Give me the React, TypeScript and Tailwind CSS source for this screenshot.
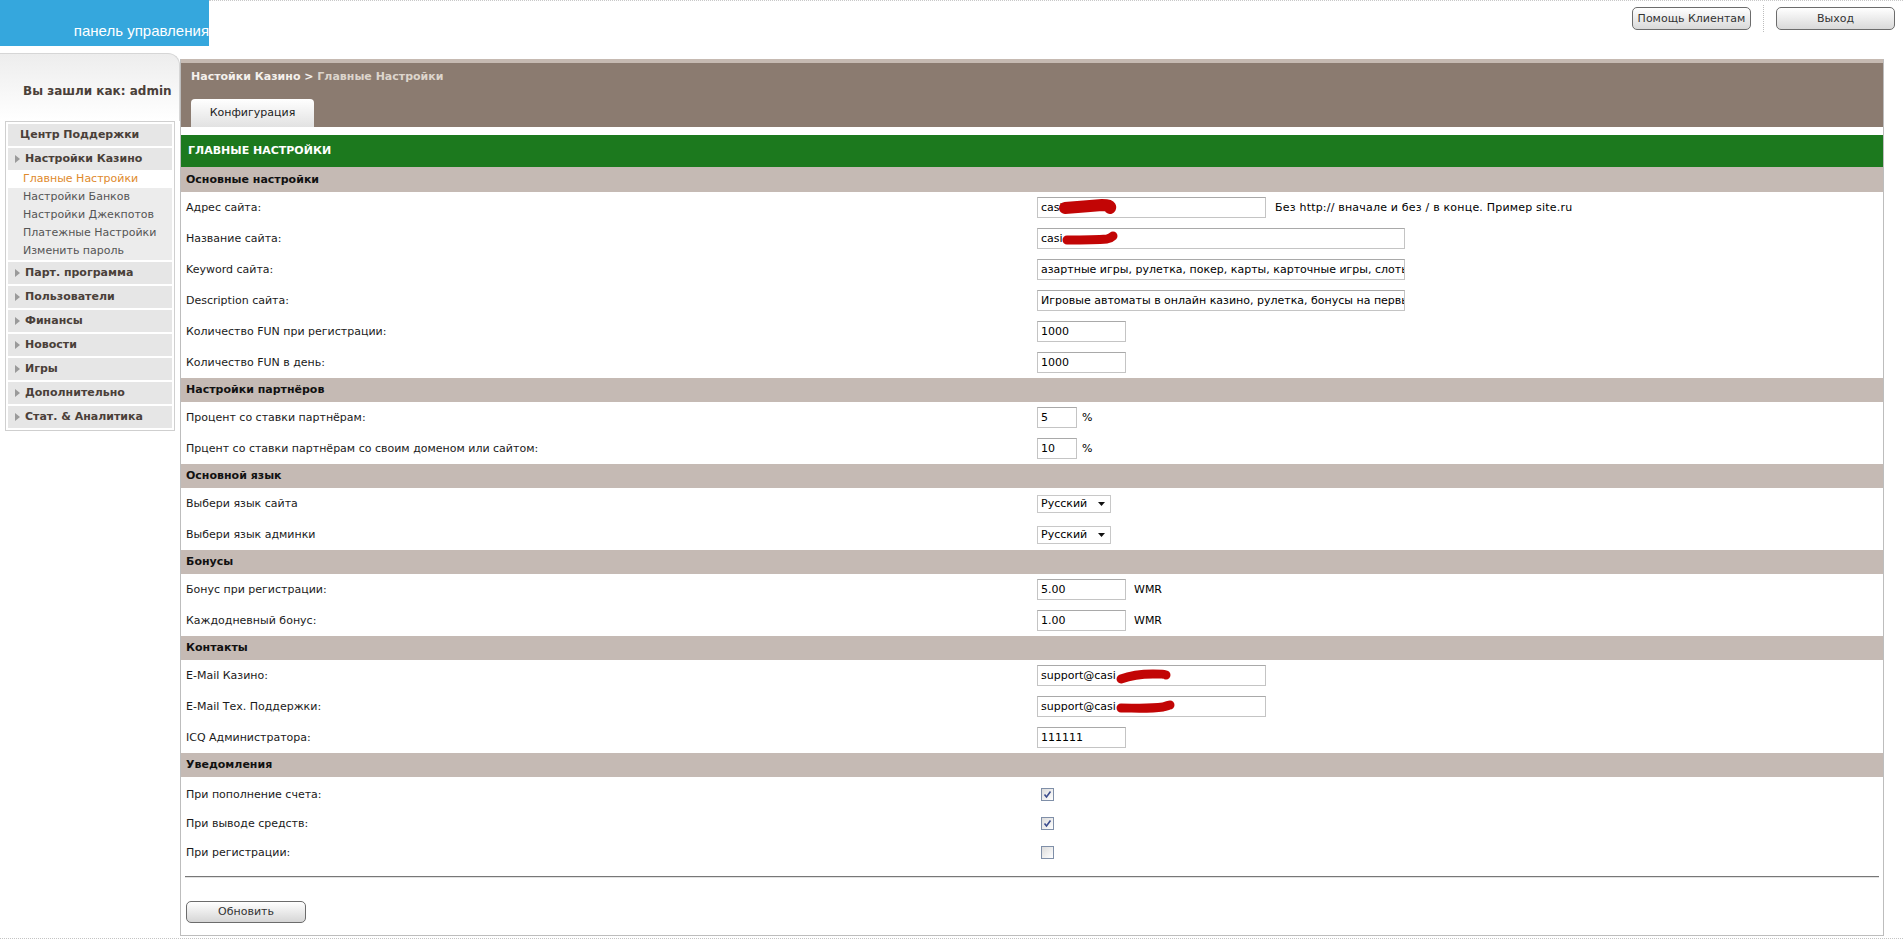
import React from "react";

type Row =
  | { kind: "text"; label: string; value: string; w: string; suffix?: string; hint?: string; scribble?: "a" | "b" | "c" | "d" }
  | { kind: "select"; label: string; value: string }
  | { kind: "check"; label: string; checked: boolean };

type Section = { title: string; rows: Row[] };

const sections: Section[] = [
  {
    title: "Основные настройки",
    rows: [
      { kind: "text", label: "Адрес сайта:", value: "casi", w: "w-[229px]", hint: "Без http:// вначале и без / в конце. Пример site.ru", scribble: "a" },
      { kind: "text", label: "Название сайта:", value: "casi", w: "w-[368px]", scribble: "b" },
      { kind: "text", label: "Keyword сайта:", value: "азартные игры, рулетка, покер, карты, карточные игры, слоты", w: "w-[368px]" },
      { kind: "text", label: "Description сайта:", value: "Игровые автоматы в онлайн казино, рулетка, бонусы на первый депозит", w: "w-[368px]" },
      { kind: "text", label: "Количество FUN при регистрации:", value: "1000", w: "w-[89px]" },
      { kind: "text", label: "Количество FUN в день:", value: "1000", w: "w-[89px]" },
    ],
  },
  {
    title: "Настройки партнёров",
    rows: [
      { kind: "text", label: "Процент со ставки партнёрам:", value: "5", w: "w-[40px]", suffix: "%" },
      { kind: "text", label: "Прцент со ставки партнёрам со своим доменом или сайтом:", value: "10", w: "w-[40px]", suffix: "%" },
    ],
  },
  {
    title: "Основной язык",
    rows: [
      { kind: "select", label: "Выбери язык сайта", value: "Русский" },
      { kind: "select", label: "Выбери язык админки", value: "Русский" },
    ],
  },
  {
    title: "Бонусы",
    rows: [
      { kind: "text", label: "Бонус при регистрации:", value: "5.00", w: "w-[89px]", suffix: "WMR" },
      { kind: "text", label: "Каждодневный бонус:", value: "1.00", w: "w-[89px]", suffix: "WMR" },
    ],
  },
  {
    title: "Контакты",
    rows: [
      { kind: "text", label: "E-Mail Казино:", value: "support@casi", w: "w-[229px]", scribble: "c" },
      { kind: "text", label: "E-Mail Тех. Поддержки:", value: "support@casi", w: "w-[229px]", scribble: "d" },
      { kind: "text", label: "ICQ Администратора:", value: "111111", w: "w-[89px]" },
    ],
  },
];

const notices: Row[] = [
  { kind: "check", label: "При пополнение счета:", checked: true },
  { kind: "check", label: "При выводе средств:", checked: true },
  { kind: "check", label: "При регистрации:", checked: false },
];

const navMain = ["Парт. программа", "Пользователи", "Финансы", "Новости", "Игры", "Дополнительно", "Стат. & Аналитика"];
const navSub = ["Главные Настройки", "Настройки Банков", "Настройки Джекпотов", "Платежные Настройки", "Изменить пароль"];

function Arrow() {
  return (
    <svg width="5" height="8" viewBox="0 0 5 8" className="mr-[5px] shrink-0">
      <polygon points="0,0 5,4 0,8" fill="#9a9a9a" />
    </svg>
  );
}

// red marker strokes hiding the domain
const scribblePaths: Record<"a" | "b" | "c" | "d", { cls: string; d: string; w: number }> = {
  a: { cls: "left-[20px] top-[1px]", d: "M7 9 C 18 8, 32 7, 44 6 C 50 6, 53 7, 52 9", w: 12 },
  b: { cls: "left-[23px] top-[1px]", d: "M6 10 C 20 10, 34 10, 46 9 C 50 8, 52 6, 52 6", w: 9 },
  c: { cls: "left-[77px] top-[2px]", d: "M6 11 C 14 8, 26 6, 38 6 C 46 6, 50 6, 51 7", w: 9 },
  d: { cls: "left-[77px] top-[2px]", d: "M6 9 C 20 9, 34 10, 48 8 C 52 7, 54 6, 55 6", w: 9 },
};

function Scribble({ type }: { type: "a" | "b" | "c" | "d" }) {
  const s = scribblePaths[type];
  return (
    <svg className={`absolute ${s.cls}`} width="62" height="18" viewBox="0 0 62 18">
      <path d={s.d} stroke="#c20505" strokeWidth={s.w} fill="none" strokeLinecap="round" strokeLinejoin="round" />
    </svg>
  );
}

function Checkbox({ checked }: { checked: boolean }) {
  return (
    <div className="ml-[4px] flex h-[13px] w-[13px] items-center justify-center border border-[#7f8fa8] bg-gradient-to-br from-[#dcdcdc] to-white">
      {checked && (
        <svg width="9" height="9" viewBox="0 0 9 9">
          <path d="M1.5 4.5 L3.5 7 L7.5 1.5" stroke="#3c4d8e" strokeWidth="1.6" fill="none" />
        </svg>
      )}
    </div>
  );
}

function FieldRow({ row }: { row: Row }) {
  return (
    <div className={`grid grid-cols-2 items-center ${row.kind === "check" ? "h-[29px]" : "h-[31px]"}`}>
      <div className="px-[5px] text-[#1a1a1a]">{row.label}</div>
      <div className="flex items-center px-[5px]">
        {row.kind === "text" && (
          <>
            <div className={`relative h-[21px] ${row.w} overflow-hidden whitespace-nowrap border border-[#c4c4c4] border-t-[#a9a9a9] bg-white pl-[3px] leading-[19px] text-black`}>
              {row.value}
              {row.scribble && <Scribble type={row.scribble} />}
            </div>
            {row.suffix && <span className={row.suffix === "%" ? "ml-[5px]" : "ml-[8px]"}>{row.suffix}</span>}
            {row.hint && <span className="ml-[9px] tracking-[0.2px]">{row.hint}</span>}
          </>
        )}
        {row.kind === "select" && (
          <div className="flex h-[18px] w-[74px] items-center justify-between border border-[#c8c8c8] bg-white pl-[3px] pr-[5px] leading-[16px]">
            <span>{row.value}</span>
            <svg width="7" height="4" viewBox="0 0 7 4">
              <polygon points="0,0 7,0 3.5,4" fill="#111" />
            </svg>
          </div>
        )}
        {row.kind === "check" && <Checkbox checked={row.checked} />}
      </div>
    </div>
  );
}

function SectionHead({ title, first }: { title: string; first?: boolean }) {
  return (
    <div className={`flex items-center bg-[#c5bab4] px-[5px] font-bold text-[#111] ${first ? "h-[25px]" : "h-[24px]"}`}>
      {title}
    </div>
  );
}

export default function App() {
  return (
    <div className="min-h-[939px] w-[1903px] bg-white font-['DejaVu_Sans',Verdana,sans-serif] text-[11px] leading-[14px] text-black">
      {/* top bar */}
      <div className="flex h-[46px]">
        <div className="flex w-[209px] items-end justify-end bg-[#35a7dd] pb-[6px] font-['Liberation_Sans',Arial,sans-serif] text-[15px] leading-[18px] text-white">
          панель управления
        </div>
        <div className="flex flex-1 justify-end border-t border-dotted border-[#c8c8c8]">
          <div className="mr-[8px] mt-[6px] flex h-[26px] items-start">
            <button className="h-[23px] w-[119px] rounded-[5px] border border-[#6c6c6c] bg-gradient-to-b from-white to-[#d9d9d9] text-[11px] text-[#333]">
              Помощь Клиентам
            </button>
            <div className="mx-[12px] -mt-[2px] h-[27px] border-l border-dotted border-[#bdbdbd]" />
            <button className="h-[23px] w-[119px] rounded-[5px] border border-[#6c6c6c] bg-gradient-to-b from-white to-[#d9d9d9] text-[11px] text-[#333]">
              Выход
            </button>
          </div>
        </div>
      </div>

      <div className="mt-[7px] flex">
        {/* sidebar */}
        <div className="w-[180px] shrink-0">
          <div className="rounded-tr-[12px] border-t border-r border-[#d6d6d6] bg-gradient-to-b from-[#ededed] to-white pb-[21px] pl-[23px] pt-[28px]">
            <div className="text-[12px] font-bold leading-[18px] text-[#4a4039]">Вы зашли как: admin</div>
          </div>
          <div className="mx-[5px] border border-[#cfcfcf] p-[2px]">
            <div className="flex h-[22px] items-center bg-[#e6e6e6] pl-[12px] font-bold text-[#4a4039]">Центр Поддержки</div>
            <div className="mt-[2px] flex h-[22px] items-center bg-[#e6e6e6] pl-[7px] font-bold text-[#4a4039]">
              <Arrow />
              Настройки Казино
            </div>
            {navSub.map((s, i) => (
              <div
                key={s}
                className={`flex h-[18px] items-center pl-[15px] ${i === 0 ? "bg-white text-[#e08a2c]" : "bg-[#ececec] text-[#555]"}`}
              >
                {s}
              </div>
            ))}
            {navMain.map((s) => (
              <div key={s} className="mt-[2px] flex h-[22px] items-center bg-[#e6e6e6] pl-[7px] font-bold text-[#4a4039]">
                <Arrow />
                {s}
              </div>
            ))}
          </div>
        </div>

        {/* content */}
        <div className="mt-[6px] w-[1704px] border-x border-b border-[#bdbdbd]">
          <div className="flex h-[68px] flex-col justify-between border-t-[4px] border-[#c6bab2] bg-[#8b7b70] pl-[10px]">
            <div className="pt-[7px] font-bold">
              <span className="text-[#f4f0ec]">Настойки Казино &gt; </span>
              <span className="text-[#ddd5cc]">Главные Настройки</span>
            </div>
            <div className="flex h-[28px] w-[123px] items-center justify-center rounded-t-[4px] bg-gradient-to-b from-white to-[#e2e2e2] text-[#222]">
              Конфигурация
            </div>
          </div>

          <div className="mt-[8px] flex h-[32px] items-center bg-[#1c791e] pl-[7px] font-bold uppercase text-white">
            Главные настройки
          </div>

          {sections.map((sec, i) => (
            <div key={sec.title}>
              <SectionHead title={sec.title} first={i === 0} />
              {sec.rows.map((r) => (
                <FieldRow key={r.label} row={r} />
              ))}
            </div>
          ))}

          <SectionHead title="Уведомления" />
          <div className="pt-[3px]">
            {notices.map((r) => (
              <FieldRow key={r.label} row={r} />
            ))}
          </div>

          <div className="mx-[4px] mt-[9px] h-[2px] border-t border-[#777] border-b border-b-[#e2e2e2]" />

          <div className="px-[5px] pb-[12px] pt-[23px]">
            <button className="h-[22px] w-[120px] rounded-[5px] border border-[#6c6c6c] bg-gradient-to-b from-white to-[#d6d6d6] text-[11px] text-[#333]">
              Обновить
            </button>
          </div>
        </div>
      </div>
      <div className="mt-[2px] border-t border-dotted border-[#c4c4c4]" />
    </div>
  );
}
